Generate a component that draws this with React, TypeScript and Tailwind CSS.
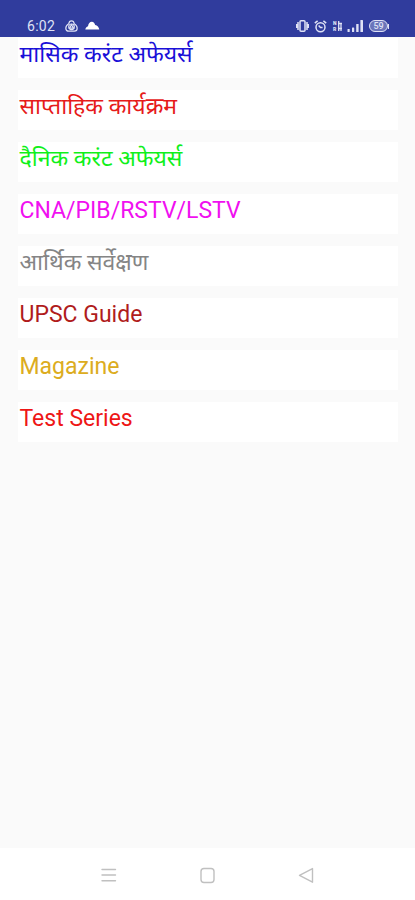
import React from 'react';

const menuItems = [
  { id: 'monthly', label: 'मासिक करंट अफेयर्स', color: 'text-[#1a10d8]' },
  { id: 'weekly', label: 'साप्ताहिक कार्यक्रम', color: 'text-[#e61a1a]' },
  { id: 'daily', label: 'दैनिक करंट अफेयर्स', color: 'text-[#0ff01a]' },
  { id: 'cna', label: 'CNA/PIB/RSTV/LSTV', color: 'text-[#f010f0]' },
  { id: 'economic', label: 'आर्थिक सर्वेक्षण', color: 'text-[#858585]' },
  { id: 'upsc', label: 'UPSC Guide', color: 'text-[#b01c1c]' },
  { id: 'magazine', label: 'Magazine', color: 'text-[#dcac20]' },
  { id: 'tests', label: 'Test Series', color: 'text-[#ee1616]' },
];

const StatusBar: React.FC = () => (
  <header className="h-[37px] shrink-0 bg-[#303c9d] text-[#dfe2f5] pt-[18px] pl-[27px] pr-[26px] flex justify-between">
    <div className="flex items-center h-4">
      <span className="w-[38px] text-[14px] leading-4 tracking-[0.3px]">6:02</span>
      <svg width="13" height="12" viewBox="0 0 13 12" fill="none" stroke="currentColor" strokeWidth="1.2">
        <path d="M6.5 .8C8.2 .8 9 2 9.2 3.7C11 4.7 12.2 6.3 12.2 8.2C12.2 10.2 11 11.2 9.3 11.2H3.7C2 11.2 .8 10.2 .8 8.2C.8 6.3 2 4.7 3.8 3.7C4 2 4.8 .8 6.5 .8Z" />
        <circle cx="6.5" cy="6.8" r="2.8" />
        <path d="M6.5 4.8L8.5 8.2H4.5Z" />
      </svg>
      <svg className="ml-[7px] -mt-[2px]" width="15" height="9" viewBox="0 0 15 9" fill="#fff">
        <path d="M.3 8.5C.5 7 1.6 5.6 3 5.2C3.5 2.2 4.8 .7 6.8 .7C8.7 .7 9.6 2 10.2 4C12.3 4.4 14 6.3 14.3 8.5Z" />
      </svg>
    </div>
    <div className="flex items-center h-4">
      <svg width="13" height="12" viewBox="0 0 13 12" fill="none" stroke="currentColor" strokeWidth="1.5">
        <rect x="4" y=".8" width="5" height="10.4" rx="1" />
        <path d="M2 2V10M11 2V10M.7 4V8M12.3 4V8" />
      </svg>
      <svg className="ml-[5px]" width="13" height="13" viewBox="0 0 13 13" fill="none" stroke="currentColor" strokeWidth="1.5">
        <circle cx="6.5" cy="7.2" r="4.5" />
        <path d="M.8 3.2L3.6 .9M12.2 3.2L9.4 .9M4.6 5.5L6.5 7.5H8.6" />
      </svg>
      <div className="ml-[6px] w-[9px] h-[12px] flex">
        <div className="w-[5px] flex flex-col text-[5px] leading-[6px] font-black">
          <span>N</span>
          <span>R</span>
        </div>
        <svg width="4" height="12" viewBox="0 0 4 12" fill="none" stroke="currentColor" strokeWidth="1.3">
          <path d="M.7 1V11M3 3V11M0 3.5H4M0 8.5H4" />
        </svg>
      </div>
      <svg className="ml-[5px]" width="17" height="12" viewBox="0 0 17 12" fill="currentColor">
        <rect x=".5" y="9" width="2.2" height="3" rx=".5" />
        <rect x="5" y="7.5" width="2.2" height="4.5" rx=".5" />
        <rect x="9.2" y="4" width="2.4" height="8" rx=".5" />
        <rect x="13.4" y="0" width="2.6" height="12" rx=".5" />
      </svg>
      <div className="ml-[5px] w-[19px] h-[12px] rounded-[6px] border-[1.5px] border-[#dfe2f5] bg-[#6b75ba] flex items-center justify-center text-[9px] leading-none font-medium">
        59
      </div>
      <span className="w-px h-[5px] bg-[#dfe2f5]" />
    </div>
  </header>
);

const NavigationBar: React.FC = () => (
  <nav className="h-[52px] shrink-0 bg-white flex items-center pt-[2px] px-[100px] justify-between text-[#c0c0c0]">
    <svg width="17" height="16" viewBox="0 0 17 16" stroke="currentColor" strokeWidth="1.4" strokeLinecap="round">
      <path d="M2 2.5H15.5M2 8H15.5M2 13.8H15.5" />
    </svg>
    <svg width="17" height="17" viewBox="0 0 17 17" fill="none" stroke="currentColor" strokeWidth="1.4">
      <rect x="2" y="1.5" width="13" height="14" rx="3" />
    </svg>
    <svg width="17" height="17" viewBox="0 0 17 17" fill="none" stroke="currentColor" strokeWidth="1.4" strokeLinejoin="round">
      <path d="M14.5 1.6V15.2L1.5 8.4Z" />
    </svg>
  </nav>
);

const App: React.FC = () => {
  return (
    <div className="min-h-screen flex flex-col bg-[#fafafa] font-[Roboto,'Noto_Sans','Noto_Sans_Devanagari',sans-serif]">
      <StatusBar />
      <main className="flex-1 flex flex-col gap-3 pt-px pl-[18px] pr-[17px]">
        {menuItems.map((item) => (
          <button key={item.id} className="h-10 bg-white text-left pl-[1.5px] flex items-start whitespace-nowrap">
            <span className={`text-[23px] leading-[33px] ${item.color}`}>{item.label}</span>
          </button>
        ))}
      </main>
      <NavigationBar />
    </div>
  );
};

export default App;
